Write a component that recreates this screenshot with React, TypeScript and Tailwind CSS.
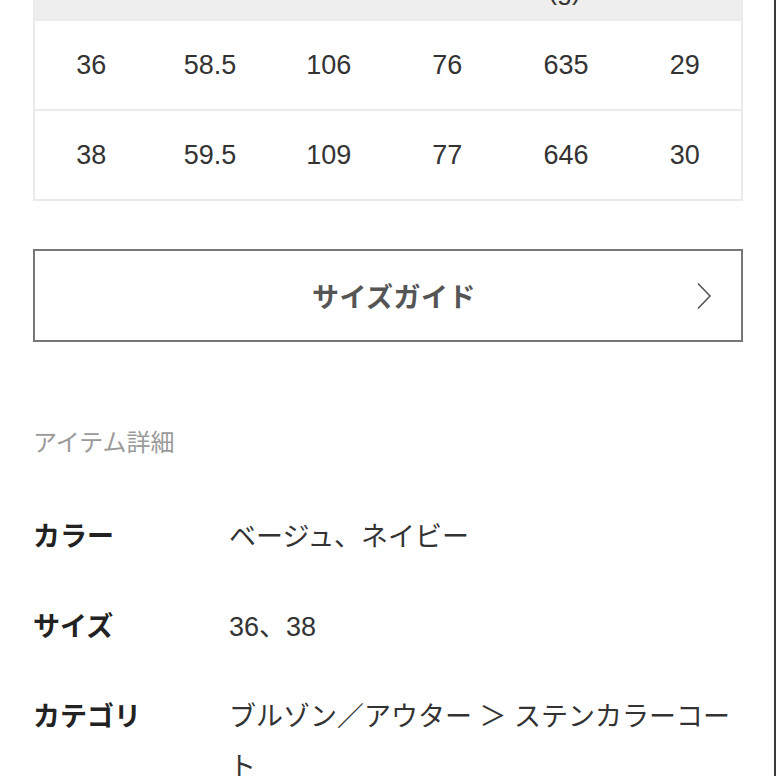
import React from 'react';

const rows = [
  ['36', '58.5', '106', '76', '635', '29'],
  ['38', '59.5', '109', '77', '646', '30'],
];

const details = [
  { label: 'カラー', value: 'ベージュ、ネイビー' },
  { label: 'サイズ', value: '36、38' },
  { label: 'カテゴリ', value: 'ブルゾン／アウター ＞ ステンカラーコート' },
];

export default function App() {
  return (
    <div className="min-h-screen w-full bg-white border-r-2 border-[#3a3a3a] overflow-hidden font-['Liberation_Sans','Noto_Sans_CJK_JP',sans-serif]">
      <div className="pl-[33px] pr-[31px] pb-10">
        {/* Size table */}
        <div className="border-x-2 border-b-2 border-[#ebebeb]">
          <div className="-mt-[60px] h-[79px] bg-[#eeeeee] grid grid-cols-6 items-end text-center text-[27px] leading-[32px] text-[#333] pb-[13px]">
            <span></span>
            <span></span>
            <span></span>
            <span></span>
            <span>(g)</span>
            <span></span>
          </div>
          {rows.map((r, i) => (
            <div key={i} className="h-[90px] border-t-2 border-[#ebebeb] flex items-center">
              <div className="flex-1 -mx-[3px] grid grid-cols-6 text-center text-[27px] text-[#333]">
                {r.map((c, j) => (
                  <span key={j}>{c}</span>
                ))}
              </div>
            </div>
          ))}
        </div>

        {/* Size guide button */}
        <div className="mt-[48px] h-[93px] border-2 border-[#777] flex items-center justify-center relative pl-[12px] pt-[6px]">
          <span className="text-[27px] font-bold text-[#555] tracking-[0.5px]">サイズガイド</span>
          <svg className="absolute right-[29px] top-1/2 -translate-y-1/2" width="16" height="28" viewBox="0 0 16 28" fill="none">
            <path d="M2 1.5 L14 14 L2 26.5" stroke="#555" strokeWidth="1.6" />
          </svg>
        </div>

        {/* Item details */}
        <h3 className="mt-[85px] text-[24px] leading-[32px] text-[#9a9a9a]">アイテム詳細</h3>
        <div className="mt-[53px] flex flex-col gap-[40px]">
          {details.map((d) => (
            <div key={d.label} className="grid grid-cols-[196px_1fr] text-[27px] leading-[50px]">
              <span className="font-bold text-[#222]">{d.label}</span>
              <span className="text-[#333]">{d.value}</span>
            </div>
          ))}
        </div>
      </div>
    </div>
  );
}
